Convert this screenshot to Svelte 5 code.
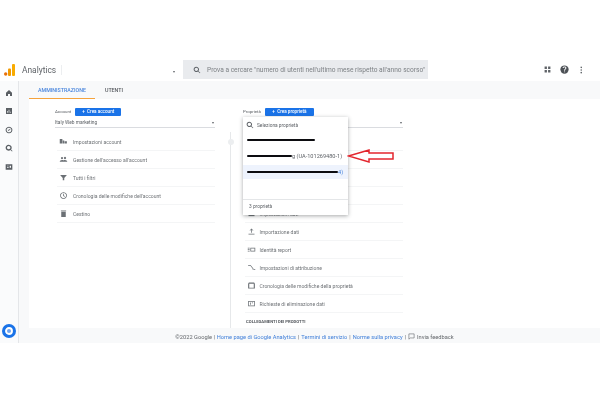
<script>
  const accountRows = [
    { label: 'Impostazioni account', d: 'M2 17V5h7v12zM10 17V9h4v8zM15 17v-6h6v6z' },
    { label: "Gestione dell'accesso all'account", d: 'M8 11a3 3 0 1 1 .01 0zM16 11a3 3 0 1 1 .01 0zM2 18c0-3 3-5 6-5s4 1 4 1 1-1 4-1 6 2 6 5z' },
    { label: 'Tutti i filtri', d: 'M3 5h18l-7 8v6h-4v-6z' },
    { label: "Cronologia delle modifiche dell'account", d: 'M12 3a9 9 0 1 0 .01 0zm0 2a7 7 0 1 1-.01 0zM11 7h2v5l3 2-1 1.500-4-2.500z' },
    { label: 'Cestino', d: 'M6 7h12v14H6zM5 4h14v2H5z' }
  ];
  const propertyRows = [
    { label: '', d: '' },
    { label: '', d: '' },
    { label: '', d: '' },
    { label: '', d: '' },
    { label: 'Impostazioni dati', d: 'M4 5h16v14H4z' },
    { label: 'Importazione dati', d: 'M11 15V7L8 10 7 9l5-5 5 5-1 1-3-3v8zM4 18h16v2H4z' },
    { label: 'Identità report', d: 'M2 7h5v2H2zM2 11h5v2H2zM2 15h5v2H2zM9 7h13v10H9zm2 2v6h9V9z' },
    { label: 'Impostazioni di attribuzione', d: 'M3 5h7v2H3zM10 6l8 10-1.500 1L9 7zM15 16h7v2h-7z' },
    { label: 'Cronologia delle modifiche della proprietà', d: 'M5 4h14l2 3v13H3V7zm1 3v11h12V7z' },
    { label: 'Richieste di eliminazione dati', d: 'M3 5h18v14H3zm2 2v10h14V7zM8 9h2v6H8zM13 9h3v2h-3z' }
  ];
  const sideIcons = [
    'M12 3l9 8v10h-6v-6H9v6H3V11z',
    'M3 3h18v18H3zm4 9v5h2v-5zm4-4v9h2V8zm4 6v3h2v-3z',
    'M12 2a10 10 0 1 0 .01 0zm0 3a7 7 0 1 1-.01 0zM8 12l1.500-1.500L11 12l4-4 1.500 1.500L11 15z',
    'M11 2a9 9 0 1 0 5.500 16.100L21 22.500 22.500 21l-4.400-4.500A9 9 0 0 0 11 2zm0 4a5 5 0 1 1-.01 0z',
    'M2 4h20v16H2zm4 4v2h5V8zm0 4v2h5v-2zm8-4v6h4V8z'
  ];
</script>

<div class="page">
  <div class="app">
    <header class="top">
      <svg class="logo" viewBox="0 0 11 12" width="11" height="12" aria-hidden="true">
        <circle cx="1.700" cy="10" r="1.700" fill="#e8710a" />
        <rect x="4" y="4.500" width="3" height="7.500" rx="1" fill="#f29900" />
        <rect x="8" y="0" width="3" height="12" rx="1" fill="#f9ab00" />
      </svg>
      <span class="brand">Analytics</span>
      <span class="brand-sep"></span>
      <span class="caret top-caret"></span>
      <div class="search">
        <svg viewBox="0 0 24 24" width="8" height="8" aria-hidden="true"><path fill="#5f6368" d="M10 2a8 8 0 1 0 4.900 14.300L20.600 22 22 20.600l-5.700-5.700A8 8 0 0 0 10 2zm0 3a5 5 0 1 1-.01 0z" /></svg>
        <span>Prova a cercare "numero di utenti nell'ultimo mese rispetto all'anno scorso"</span>
      </div>
      <div class="top-icons">
        <svg viewBox="0 0 24 24" width="7" height="7" aria-hidden="true"><path fill="#5f6368" d="M2 2h8v8H2zM14 2h8v8h-8zM2 14h8v8H2zM14 14h8v8h-8z" /></svg>
        <svg viewBox="0 0 24 24" width="9" height="9" aria-hidden="true"><circle cx="12" cy="12" r="11" fill="#4d5156" /><path fill="#fff" d="M11 15h2.500v-1c0-2 3.500-2.500 3.500-6 0-2.500-2-4-5-4S7 5.500 7 8h2.500c0-1 1-1.800 2.500-1.800s2.500.8 2.500 1.800c0 2-3.500 2.500-3.500 6zM11 17h2.500v2.500H11z" /></svg>
        <svg class="dots" viewBox="0 0 6 24" width="2.500" height="8" aria-hidden="true"><circle cx="3" cy="4" r="2.400" fill="#5f6368" /><circle cx="3" cy="12" r="2.400" fill="#5f6368" /><circle cx="3" cy="20" r="2.400" fill="#5f6368" /></svg>
      </div>
    </header>

    <div class="body">
      <aside class="side">
        <div class="side-icons">
          {#each sideIcons as d}
            <svg viewBox="0 0 24 24" width="8" height="8" aria-hidden="true"><path fill="#5a5f64" fill-rule="evenodd" d={d} /></svg>
          {/each}
        </div>
        <svg class="gear" viewBox="0 0 16 16" width="14" height="14" aria-hidden="true">
          <circle cx="8" cy="8" r="8" fill="#1a73e8" />
          <circle cx="8" cy="8" r="3.400" fill="#6fa4ef" stroke="#fff" stroke-width="2.200" />
        </svg>
      </aside>

      <main class="main">
        <nav class="tabs">
          <span class="tab active">AMMINISTRAZIONE</span>
          <span class="tab">UTENTI</span>
        </nav>

        <section class="panel">
          <div class="col">
            <div class="col-head"><span>Account</span><button class="create">+ &nbsp;Crea account</button></div>
            <div class="select"><span>Italy Web marketing</span><i class="caret"></i></div>
            <ul class="rows">
              {#each accountRows as r}
                <li>
                  <svg viewBox="0 0 24 24" width="9" height="9" aria-hidden="true"><path fill="#6b7075" fill-rule="evenodd" d={r.d} /></svg>
                  <span>{r.label}</span>
                </li>
              {/each}
            </ul>
          </div>

          <div class="divider"><span class="knob"></span></div>

          <div class="col prop">
            <div class="col-head"><span>Proprietà</span><button class="create wide">+ &nbsp;Crea proprietà</button></div>
            <div class="select"><span></span><i class="caret"></i></div>
            <ul class="rows">
              {#each propertyRows as r}
                <li>
                  {#if r.label}
                    <svg viewBox="0 0 24 24" width="9" height="9" aria-hidden="true"><path fill="#6b7075" fill-rule="evenodd" d={r.d} /></svg>
                    <span>{r.label}</span>
                  {/if}
                </li>
              {/each}
            </ul>
            <div class="section-title">COLLEGAMENTI DEI PRODOTTI</div>

            <div class="menu">
              <div class="menu-search">
                <svg viewBox="0 0 24 24" width="8" height="8" aria-hidden="true"><path fill="#5f6368" d="M10 2a8 8 0 1 0 4.900 14.300L20.600 22 22 20.600l-5.700-5.700A8 8 0 0 0 10 2zm0 3a5 5 0 1 1-.01 0z" /></svg>
                <span>Seleziona proprietà</span>
              </div>
              <div class="menu-list">
                <div class="item"><i class="bar b1"></i></div>
                <div class="item"><i class="bar b2"></i><span>g (UA-101269480-1)</span></div>
                <div class="item sel"><i class="bar b3"></i><span>4)</span></div>
              </div>
              <div class="menu-foot">3 proprietà</div>
            </div>

            <svg class="arrow" viewBox="0 0 48 14" width="48" height="14" aria-hidden="true">
              <path d="M1.500 7 L22 1 V4 H46 V10 H22 V13 Z" fill="#fff" stroke="#e3262e" stroke-width="1.500" />
            </svg>
          </div>
        </section>

        <footer class="foot">
          <span class="gray">©2022 Google |</span>
          <span class="blue">Home page di Google Analytics</span>
          <span class="gray">|</span>
          <span class="blue">Termini di servizio</span>
          <span class="gray">|</span>
          <span class="blue">Norme sulla privacy</span>
          <span class="gray">|</span>
          <svg viewBox="0 0 24 24" width="7" height="7" aria-hidden="true"><path fill="none" stroke="#5f6368" stroke-width="2" d="M3 3h18v14H8l-5 4z" /></svg>
          <span class="gray">Invia feedback</span>
        </footer>
      </main>
    </div>
  </div>
</div>

<style>
  :global(body) {
    margin: 0;
    background: #fff;
  }
  .page {
    width: 600px;
    height: 400px;
    padding-top: 50px;
    box-sizing: border-box;
    overflow: hidden;
    font-family: Roboto, "Liberation Sans", sans-serif;
    color: #5f6368;
  }
  .app {
    height: 293px;
    display: flex;
    flex-direction: column;
    filter: blur(0.45px);
  }
  .top {
    height: 31px;
    box-sizing: border-box;
    padding: 8px 0 0 4px;
    display: flex;
    align-items: center;
    background: #fff;
    flex: none;
  }
  .brand {
    font-size: 8.400px;
    margin-left: 7px;
    color: #5f6368;
    width: 39px;
  }
  .brand-sep {
    width: 1px;
    height: 10px;
    background: #eceef0;
  }
  .caret {
    display: block;
    width: 0;
    height: 0;
    border-left: 1.500px solid transparent;
    border-right: 1.500px solid transparent;
    border-top: 2px solid #5f6368;
  }
  .top-caret { margin: 5px 0 0 111px; }
  .search {
    margin-left: 8px;
    width: 245px;
    height: 19px;
    box-sizing: border-box;
    padding-left: 10px;
    background: #e9ebee;
    display: flex;
    align-items: center;
    gap: 6px;
    font-size: 6.600px;
    color: #7d8185;
    white-space: nowrap;
    overflow: hidden;
  }
  .top-icons {
    margin-left: auto;
    margin-right: 18px;
    display: flex;
    align-items: center;
    gap: 9px;
  }
  .dots { margin-left: 2px; }
  .body {
    flex: 1;
    display: flex;
    min-height: 0;
  }
  .side {
    width: 19px;
    flex: none;
    box-sizing: border-box;
    border-right: 1px solid #e4e6e9;
    background: #fafbfc;
    display: flex;
    flex-direction: column;
    align-items: center;
    justify-content: space-between;
    padding: 8px 0 5px;
  }
  .side-icons {
    display: flex;
    flex-direction: column;
    gap: 10.400px;
  }
  .side-icons svg { display: block; }
  .gear { display: block; }
  .main {
    flex: 1;
    min-width: 0;
    background: #f8f9fa;
    display: flex;
    flex-direction: column;
  }
  .tabs {
    height: 18px;
    flex: none;
    display: flex;
    padding-left: 10px;
    box-sizing: border-box;
  }
  .tab {
    font-size: 5.300px;
    font-weight: 500;
    color: #55595e;
    line-height: 18px;
    padding: 0 9px;
    margin-left: 1px;
    white-space: nowrap;
  }
  .tab.active {
    color: #4a86dd;
    border-bottom: 1px solid #f5a33c;
    height: 18px;
    box-sizing: border-box;
    margin-left: 0;
    margin-right: 0;
  }
  .panel {
    flex: 1;
    min-height: 0;
    margin-left: 10px;
    background: #fff;
    display: flex;
    padding-left: 26px;
    overflow: hidden;
  }
  .col {
    width: 160px;
    flex: none;
    position: relative;
  }
  .col-head {
    height: 17px;
    padding-top: 9px;
    box-sizing: border-box;
    display: flex;
    align-items: flex-start;
    gap: 4px;
    font-size: 4.400px;
    line-height: 8px;
    color: #5f6368;
  }
  .create {
    border: 0;
    padding: 0;
    height: 8px;
    width: 46px;
    border-radius: 1px;
    background: #1a73e8;
    color: #fff;
    font: 500 4.600px/8px Roboto, sans-serif;
    text-align: center;
  }
  .create.wide { width: 49px; }
  .select {
    height: 12px;
    box-sizing: border-box;
    padding: 2px 1px 0 0;
    border-bottom: 1px solid #dadce0;
    display: flex;
    justify-content: space-between;
    align-items: center;
    font-size: 4.800px;
  }
  .rows {
    list-style: none;
    margin: 5px 0 0;
    padding: 0 0 0 2px;
  }
  .rows li {
    height: 18px;
    box-sizing: border-box;
    display: flex;
    align-items: center;
    gap: 5px;
    padding-left: 2px;
    font-size: 5.050px;
    color: #6d7175;
    white-space: nowrap;
    border-bottom: 1px solid #f4f5f6;
  }
  .rows svg { flex: none; }
  .divider {
    width: 1px;
    flex: none;
    margin: 33px 12px 0 15px;
    background: #e6e8ea;
    position: relative;
  }
  .knob {
    position: absolute;
    left: -2.500px;
    top: 7px;
    width: 6px;
    height: 6px;
    border-radius: 50%;
    background: #eceef0;
  }
  .prop .rows li { gap: 3.500px; }
  .section-title {
    margin: 6px 0 0 3px;
    font-size: 4.200px;
    font-weight: 700;
    color: #55595e;
    white-space: nowrap;
  }
  .menu {
    position: absolute;
    left: 0;
    top: 18px;
    width: 105px;
    height: 98px;
    display: flex;
    flex-direction: column;
    background: #fff;
    box-shadow: 0 1px 4px rgba(60, 64, 67, 0.45);
    font-size: 5px;
  }
  .menu-search {
    height: 16px;
    flex: none;
    display: flex;
    align-items: center;
    gap: 3px;
    padding-left: 3px;
    font-size: 4.800px;
  }
  .menu-list { flex: 1; }
  .item {
    height: 14px;
    margin-bottom: 2px;
    display: flex;
    align-items: center;
    padding-left: 4px;
    font-size: 5.600px;
    white-space: nowrap;
  }
  .item.sel {
    background: #eef3fd;
    color: #4a86dd;
    margin-top: 1px;
  }
  .bar {
    display: block;
    height: 2.600px;
    background: #0c0c10;
    border-radius: 1px;
    flex: none;
  }
  .b1 { width: 68px; }
  .b2 { width: 45px; }
  .b3 { width: 91px; }
  .menu-foot {
    height: 15px;
    flex: none;
    border-top: 1px solid #e4e6e8;
    font-size: 4.800px;
    line-height: 14px;
    padding-left: 6px;
  }
  .arrow {
    position: absolute;
    left: 104px;
    top: 50px;
  }
  .foot {
    height: 15px;
    flex: none;
    box-sizing: border-box;
    padding: 2px 0 0 10px;
    display: flex;
    align-items: center;
    justify-content: center;
    gap: 2px;
    font-size: 5.700px;
    white-space: nowrap;
  }
  .blue { color: #3f7fd9; }
  .gray { color: #63676b; }
</style>
